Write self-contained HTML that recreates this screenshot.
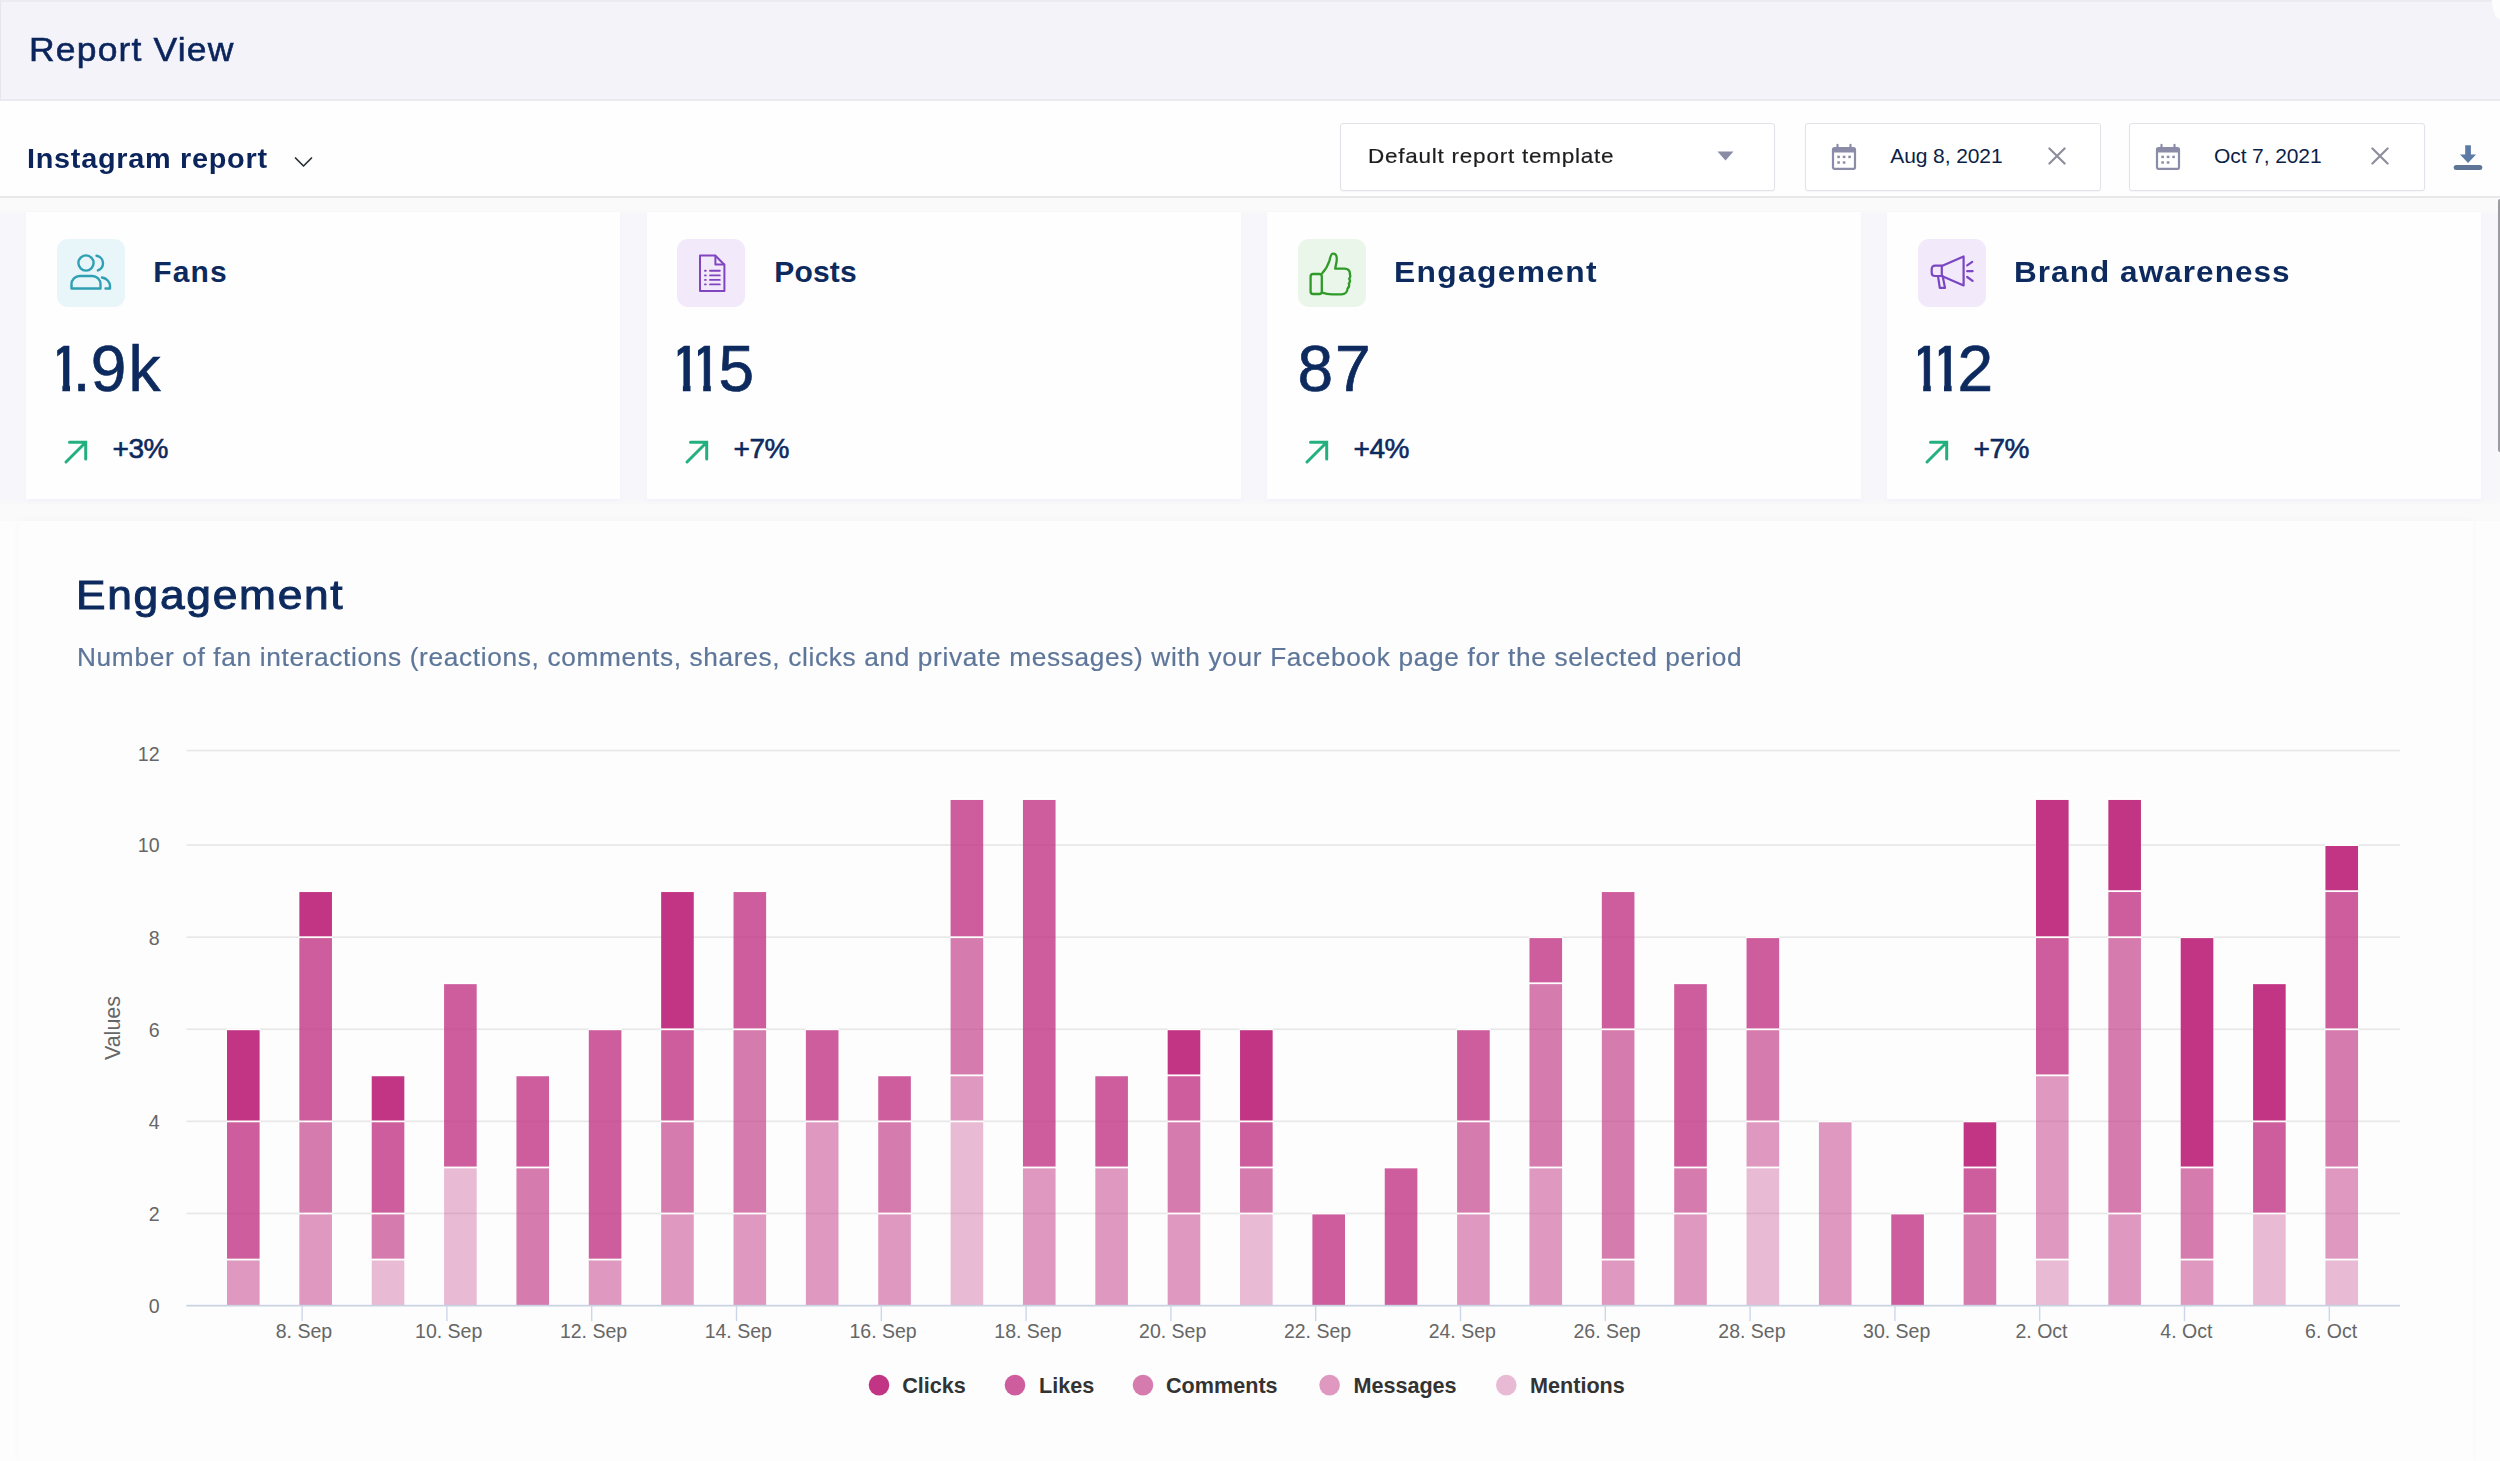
<!DOCTYPE html>
<html lang="en"><head><meta charset="utf-8"><title>Report View</title>
<style>
*{box-sizing:border-box}
html,body{margin:0;padding:0}
html{width:2500px;height:1461px;overflow:hidden}
body{width:2500px;height:1461px;overflow:hidden;background:#fdfdfd;font-family:"Liberation Sans",sans-serif;position:relative}
.t{position:absolute;white-space:nowrap}
.abs{position:absolute}
.hdr{position:absolute;left:0;top:0;width:2500px;height:100.5px;background:#f3f3f9;border-top:2px solid #ebebf0;border-left:1.5px solid #e6e6ee;border-bottom:2px solid #e9e9f0}
.bar{position:absolute;left:0;top:100.5px;width:2500px;height:97.3px;background:#fefefe;border-bottom:2px solid #e8e8ea}
.box{position:absolute;top:123px;height:67.5px;background:#fff;border:1.5px solid #e2e2e8;border-radius:3px;box-shadow:0 1px 2px rgba(0,0,0,.04)}
.strip{position:absolute;left:0;top:198px;width:2500px;height:323px;background:#fafafa}
.row{position:absolute;left:0;top:213px;width:2500px;height:289px;background:#f6f6fb;filter:blur(1.5px)}
.card{position:absolute;top:212px;width:594px;height:287px;background:#fefefe;box-shadow:0 2px 5px rgba(120,120,140,.035)}
.ib{position:absolute;left:31px;top:27px;width:68px;height:68px;border-radius:11px}
.panel{position:absolute;left:19px;top:521px;width:2454px;height:940px;background:#fdfdfd;box-shadow:0 0 7px 1px rgba(0,0,0,.022)}
.num span{display:inline-block;vertical-align:top}
.num .one{clip-path:polygon(10px 0,22.8px 0,22.8px 100%,15.200px 100%,15.200px 30px,10px 30px)}
.chart{position:absolute;left:0;top:0}
</style></head><body>
<div class="hdr"></div>
<div class="abs" style="left:2492px;top:0;width:8px;height:19px;background:#fdfdfd;border-bottom-left-radius:8px 19px"></div>
<div class="t" style="left:28.80px;top:33.04px;font-size:33.5px;line-height:33.5px;font-weight:normal;color:#0b255c;letter-spacing:1.1px;-webkit-text-stroke:0.55px #0b255c;transform:scaleX(1.06);transform-origin:0 50%;">Report View</div>
<div class="bar"></div>
<div class="t" style="left:27.20px;top:145.10px;font-size:28px;line-height:28px;font-weight:bold;color:#0b255c;letter-spacing:0.7px;transform:scaleX(1.03);transform-origin:0 50%;">Instagram report</div>
<svg class="abs" style="left:293px;top:155px" width="21" height="14" viewBox="0 0 21 14"><path d="M2.500 3l8 8 8-8" fill="none" stroke="#2b2f3a" stroke-width="1.700" stroke-linecap="round" stroke-linejoin="round"/></svg>
<div class="box" style="left:1340px;width:435px"></div>
<div class="t" style="left:1368.40px;top:145.02px;font-size:21px;line-height:21px;font-weight:normal;color:#1d1d1f;letter-spacing:0.72px;-webkit-text-stroke:0.2px #1d1d1f;transform:scaleX(1.07);transform-origin:0 50%;">Default report template</div>
<svg class="abs" style="left:1717px;top:151px" width="17" height="10" viewBox="0 0 17 10"><path d="M0.500 0.500h16l-8 9z" fill="#8a8ba5"/></svg>
<div class="box" style="left:1805px;width:296px"></div>
<div class="abs" style="left:1830.8px;top:143px"><svg width="26" height="28" viewBox="0 0 26 28"><g fill="none" stroke="#8b8ca8" stroke-width="2.200" stroke-linejoin="round" stroke-linecap="round">
<rect x="2" y="5.200" width="22" height="20.600" rx="1.500"/>
<path d="M6.500 1.800v4M19.500 1.800v4"/>
</g><rect x="2" y="5.200" width="22" height="4.300" fill="#8b8ca8"/>
<g fill="#8b8ca8"><rect x="6.300" y="12.700" width="2.600" height="2.400"/><rect x="11.800" y="12.700" width="2.600" height="2.400"/><rect x="17.300" y="12.700" width="2.600" height="2.400"/><rect x="6.300" y="18.300" width="2.600" height="2.400"/><rect x="11.800" y="18.300" width="2.600" height="2.400"/></g></svg></div>
<div class="t" style="left:1890.30px;top:144.72px;font-size:21px;line-height:21px;font-weight:normal;color:#0b1f47;letter-spacing:-0.1px;">Aug 8, 2021</div>
<div class="abs" style="left:2047.5px;top:146.600px"><svg width="18" height="18" viewBox="0 0 19 19"><path d="M1.500 1.500l16 16M17.500 1.500l-16 16" stroke="#8e8e9c" stroke-width="2.300" stroke-linecap="round"/></svg></div>
<div class="box" style="left:2128.5px;width:296px"></div>
<div class="abs" style="left:2154.6000000000004px;top:143px"><svg width="26" height="28" viewBox="0 0 26 28"><g fill="none" stroke="#8b8ca8" stroke-width="2.200" stroke-linejoin="round" stroke-linecap="round">
<rect x="2" y="5.200" width="22" height="20.600" rx="1.500"/>
<path d="M6.500 1.800v4M19.500 1.800v4"/>
</g><rect x="2" y="5.200" width="22" height="4.300" fill="#8b8ca8"/>
<g fill="#8b8ca8"><rect x="6.300" y="12.700" width="2.600" height="2.400"/><rect x="11.800" y="12.700" width="2.600" height="2.400"/><rect x="17.300" y="12.700" width="2.600" height="2.400"/><rect x="6.300" y="18.300" width="2.600" height="2.400"/><rect x="11.800" y="18.300" width="2.600" height="2.400"/></g></svg></div>
<div class="t" style="left:2214.00px;top:144.72px;font-size:21px;line-height:21px;font-weight:normal;color:#0b1f47;letter-spacing:-0.1px;">Oct 7, 2021</div>
<div class="abs" style="left:2371.3px;top:146.600px"><svg width="18" height="18" viewBox="0 0 19 19"><path d="M1.500 1.500l16 16M17.500 1.500l-16 16" stroke="#8e8e9c" stroke-width="2.300" stroke-linecap="round"/></svg></div>
<svg class="abs" style="left:2452px;top:143px" width="32" height="29" viewBox="0 0 32 29"><path d="M13.200 2.200h5.700v9.300h5.200l-8.050 8.400-8.050-8.400h5.200z" fill="#5b7ba6"/><rect x="1.700" y="21.900" width="28.600" height="5" rx="2.500" fill="#5f7598"/></svg>
<div class="strip"></div><div class="row"></div>
<div class="card" style="left:26px"><div class="ib" style="left:31px;background:#e8f6fa"><svg width="68" height="68" viewBox="0 0 68 68"><g fill="none" stroke="#2f9fb3" stroke-width="2.4" stroke-linecap="round" stroke-linejoin="round">
<circle cx="29" cy="24" r="7.6"/>
<path d="M14.5 49.5v-4.2c0-4.6 3.7-8.3 8.3-8.3h12.4c4.6 0 8.3 3.700 8.300 8.300v4.2z"/>
<path d="M39.500 16.800c3.700 0.600 6.500 3.700 6.500 7.500 0 3.300-2.100 6.100-5.100 7.100"/>
<path d="M45 38.500c4.600 0.700 8 4.300 8 8.600v2.400h-4.500"/>
</g></svg></div></div>
<div class="t" style="left:153.20px;top:256.91px;font-size:30px;line-height:30px;font-weight:bold;color:#0d2a5e;letter-spacing:1.2px;">Fans</div>
<div class="t num" style="left:47.2px;top:337.02px;height:64px;font-size:64px;line-height:64px;color:#0d2a5e;-webkit-text-stroke:0.7px #0d2a5e;"><span class="one">1</span><span style="margin-left:-9.94px">.</span><span style="margin-left:0.07px">9</span><span style="margin-left:2.21px">k</span></div>
<div class="abs" style="left:62.6px;top:437.500px"><svg width="28" height="28" viewBox="0 0 28 28"><path d="M3 24L22.500 4.500M6.500 4.300h16.200v16.700" fill="none" stroke="#23b07e" stroke-width="3" stroke-linecap="round" stroke-linejoin="miter"/></svg></div>
<div class="t" style="left:112.50px;top:435.30px;font-size:28px;line-height:28px;font-weight:normal;color:#0d2a5e;letter-spacing:-0.4px;-webkit-text-stroke:0.6px #0d2a5e;">+3%</div>
<div class="card" style="left:647px"><div class="ib" style="left:29.8px;background:#f2e9fb"><svg width="68" height="68" viewBox="0 0 68 68"><g fill="none" stroke="#8146bf" stroke-width="2" stroke-linejoin="round" stroke-linecap="round">
<path d="M23 16.500h15.200l9.200 9.200v26.300h-24.400z"/>
<path d="M38.400 16.800v8.800h8.800"/>
<path d="M33 31.800h9.800M33 36.400h9.800M33 40.900h9.800M33 45.400h9.800" stroke-width="1.900"/>
<path d="M28 31.800h.8M28 36.400h.8M28 40.900h.8M28 45.400h.8" stroke-width="1.900"/>
</g></svg></div></div>
<div class="t" style="left:774.20px;top:256.91px;font-size:30px;line-height:30px;font-weight:bold;color:#0d2a5e;letter-spacing:0.2px;">Posts</div>
<div class="t num" style="left:667.7px;top:337.02px;height:64px;font-size:64px;line-height:64px;color:#0d2a5e;-webkit-text-stroke:0.7px #0d2a5e;"><span class="one">1</span><span class="one" style="margin-left:-15.29px">1</span><span style="margin-left:-5.19px">5</span></div>
<div class="abs" style="left:683.6px;top:437.500px"><svg width="28" height="28" viewBox="0 0 28 28"><path d="M3 24L22.500 4.500M6.500 4.300h16.200v16.700" fill="none" stroke="#23b07e" stroke-width="3" stroke-linecap="round" stroke-linejoin="miter"/></svg></div>
<div class="t" style="left:733.50px;top:435.30px;font-size:28px;line-height:28px;font-weight:normal;color:#0d2a5e;letter-spacing:-0.4px;-webkit-text-stroke:0.6px #0d2a5e;">+7%</div>
<div class="card" style="left:1267px"><div class="ib" style="left:31.1px;background:#eaf6e9"><svg width="68" height="68" viewBox="0 0 68 68"><g fill="none" stroke="#2f9a28" stroke-width="2.300" stroke-linejoin="round" stroke-linecap="round">
<rect x="12.600" y="35" width="11.200" height="20" rx="2.600"/>
<path d="M24.200 34.200C27.500 30.600 30 26.600 31.500 21.500C32.300 18.500 32.800 14.700 35 14.700C37.300 14.700 38.800 16.800 38.800 20C38.800 23.500 37.600 26.500 37.200 29.600H46.500C50 29.600 52.300 32 51.800 35C52.500 36.500 52.300 38.500 51.200 39.800C52.200 41.300 52 43.300 50.800 44.600C51.500 46.300 51 48.200 49.600 49.300C49.600 52.800 47 55.300 43.500 55.300H34C30.500 55.300 27.500 54.800 24.200 53.600"/>
</g></svg></div></div>
<div class="t" style="left:1394.20px;top:256.91px;font-size:30px;line-height:30px;font-weight:bold;color:#0d2a5e;letter-spacing:1.23px;transform:scaleX(1.06);transform-origin:0 50%;">Engagement</div>
<div class="t num" style="left:1297.6px;top:337.02px;height:64px;font-size:64px;line-height:64px;color:#0d2a5e;-webkit-text-stroke:0.7px #0d2a5e;"><span>8</span><span style="margin-left:1.81px">7</span></div>
<div class="abs" style="left:1303.6px;top:437.500px"><svg width="28" height="28" viewBox="0 0 28 28"><path d="M3 24L22.500 4.500M6.500 4.300h16.200v16.700" fill="none" stroke="#23b07e" stroke-width="3" stroke-linecap="round" stroke-linejoin="miter"/></svg></div>
<div class="t" style="left:1353.50px;top:435.30px;font-size:28px;line-height:28px;font-weight:normal;color:#0d2a5e;letter-spacing:-0.4px;-webkit-text-stroke:0.6px #0d2a5e;">+4%</div>
<div class="card" style="left:1887px"><div class="ib" style="left:30.6px;background:#f2e9fb"><svg width="68" height="68" viewBox="0 0 68 68"><g fill="none" stroke="#7a46c2" stroke-width="2.200" stroke-linejoin="round" stroke-linecap="round">
<path d="M23.800 27l21.800-9.600v29l-21.800-9.400"/>
<path d="M23.800 26.600h-6.800c-1.900 0-3.300 1.400-3.300 3.300v3.800c0 1.900 1.400 3.300 3.300 3.300h6.800z"/>
<path d="M20 37.200l1.800 11.700h5.200l-2.300-11.700"/>
<path d="M49.200 26.300l5-3.400M49.200 32.200h5.400M49.200 38l5.400 3.900"/>
</g></svg></div></div>
<div class="t" style="left:2014.20px;top:256.91px;font-size:30px;line-height:30px;font-weight:bold;color:#0d2a5e;letter-spacing:1.0px;transform:scaleX(1.05);transform-origin:0 50%;">Brand awareness</div>
<div class="t num" style="left:1908px;top:337.02px;height:64px;font-size:64px;line-height:64px;color:#0d2a5e;-webkit-text-stroke:0.7px #0d2a5e;"><span class="one">1</span><span class="one" style="margin-left:-14.79px">1</span><span style="margin-left:-6.89px">2</span></div>
<div class="abs" style="left:1923.6px;top:437.500px"><svg width="28" height="28" viewBox="0 0 28 28"><path d="M3 24L22.500 4.500M6.500 4.300h16.200v16.700" fill="none" stroke="#23b07e" stroke-width="3" stroke-linecap="round" stroke-linejoin="miter"/></svg></div>
<div class="t" style="left:1973.50px;top:435.30px;font-size:28px;line-height:28px;font-weight:normal;color:#0d2a5e;letter-spacing:-0.4px;-webkit-text-stroke:0.6px #0d2a5e;">+7%</div>
<div class="panel"></div>
<div class="t" style="left:76.00px;top:575.29px;font-size:41px;line-height:41px;font-weight:normal;color:#0d2a5e;letter-spacing:1.6px;-webkit-text-stroke:1.0px #0d2a5e;transform:scaleX(1.08);transform-origin:0 50%;">Engagement</div>
<div class="t" style="left:76.80px;top:645.04px;font-size:25px;line-height:25px;font-weight:normal;color:#5d7699;letter-spacing:0.62px;-webkit-text-stroke:0.2px #5d7699;transform:scaleX(1.05);transform-origin:0 50%;">Number of fan interactions (reactions, comments, shares, clicks and private messages) with your Facebook page for the selected period</div>
<svg class="chart" width="2500" height="1461" viewBox="0 0 2500 1461" font-family="Liberation Sans, sans-serif">
<text x="159.6" y="1312.90" font-size="19.6" fill="#666" text-anchor="end">0</text>
<rect x="186.4" y="1212.60" width="2213.6" height="1.7" fill="#e8e8e8"/>
<text x="159.6" y="1220.80" font-size="19.6" fill="#666" text-anchor="end">2</text>
<rect x="186.4" y="1120.50" width="2213.6" height="1.7" fill="#e8e8e8"/>
<text x="159.6" y="1128.70" font-size="19.6" fill="#666" text-anchor="end">4</text>
<rect x="186.4" y="1028.40" width="2213.6" height="1.7" fill="#e8e8e8"/>
<text x="159.6" y="1036.60" font-size="19.6" fill="#666" text-anchor="end">6</text>
<rect x="186.4" y="936.30" width="2213.6" height="1.7" fill="#e8e8e8"/>
<text x="159.6" y="944.50" font-size="19.6" fill="#666" text-anchor="end">8</text>
<rect x="186.4" y="844.20" width="2213.6" height="1.7" fill="#e8e8e8"/>
<text x="159.6" y="852.40" font-size="19.6" fill="#666" text-anchor="end">10</text>
<rect x="186.4" y="749.70" width="2213.6" height="1.7" fill="#e8e8e8"/>
<text x="159.6" y="760.70" font-size="19.6" fill="#666" text-anchor="end">12</text>
<rect x="227.00" y="1259.55" width="32.6" height="46.05" fill="rgb(193,53,132)" fill-opacity="0.5"/>
<rect x="227.00" y="1121.40" width="32.6" height="138.15" fill="rgb(193,53,132)" fill-opacity="0.8"/>
<rect x="227.00" y="1029.30" width="32.6" height="92.10" fill="rgb(193,53,132)" fill-opacity="1.0"/>
<rect x="226.50" y="1258.65" width="33.6" height="1.8" fill="#fff"/>
<rect x="226.50" y="1120.50" width="33.6" height="1.8" fill="#fff"/>
<rect x="226.50" y="1028.40" width="33.6" height="1.8" fill="#fff"/>
<rect x="299.36" y="1213.50" width="32.6" height="92.10" fill="rgb(193,53,132)" fill-opacity="0.5"/>
<rect x="299.36" y="1121.40" width="32.6" height="92.10" fill="rgb(193,53,132)" fill-opacity="0.65"/>
<rect x="299.36" y="937.20" width="32.6" height="184.20" fill="rgb(193,53,132)" fill-opacity="0.8"/>
<rect x="299.36" y="891.15" width="32.6" height="46.05" fill="rgb(193,53,132)" fill-opacity="1.0"/>
<rect x="298.86" y="1212.60" width="33.6" height="1.8" fill="#fff"/>
<rect x="298.86" y="1120.50" width="33.6" height="1.8" fill="#fff"/>
<rect x="298.86" y="936.30" width="33.6" height="1.8" fill="#fff"/>
<rect x="298.86" y="890.25" width="33.6" height="1.8" fill="#fff"/>
<rect x="371.72" y="1259.55" width="32.6" height="46.05" fill="rgb(193,53,132)" fill-opacity="0.33"/>
<rect x="371.72" y="1213.50" width="32.6" height="46.05" fill="rgb(193,53,132)" fill-opacity="0.65"/>
<rect x="371.72" y="1121.40" width="32.6" height="92.10" fill="rgb(193,53,132)" fill-opacity="0.8"/>
<rect x="371.72" y="1075.35" width="32.6" height="46.05" fill="rgb(193,53,132)" fill-opacity="1.0"/>
<rect x="371.22" y="1258.65" width="33.6" height="1.8" fill="#fff"/>
<rect x="371.22" y="1212.60" width="33.6" height="1.8" fill="#fff"/>
<rect x="371.22" y="1120.50" width="33.6" height="1.8" fill="#fff"/>
<rect x="371.22" y="1074.45" width="33.6" height="1.8" fill="#fff"/>
<rect x="444.08" y="1167.45" width="32.6" height="138.15" fill="rgb(193,53,132)" fill-opacity="0.33"/>
<rect x="444.08" y="983.25" width="32.6" height="184.20" fill="rgb(193,53,132)" fill-opacity="0.8"/>
<rect x="443.58" y="1166.55" width="33.6" height="1.8" fill="#fff"/>
<rect x="443.58" y="982.35" width="33.6" height="1.8" fill="#fff"/>
<rect x="516.44" y="1167.45" width="32.6" height="138.15" fill="rgb(193,53,132)" fill-opacity="0.65"/>
<rect x="516.44" y="1075.35" width="32.6" height="92.10" fill="rgb(193,53,132)" fill-opacity="0.8"/>
<rect x="515.94" y="1166.55" width="33.6" height="1.8" fill="#fff"/>
<rect x="515.94" y="1074.45" width="33.6" height="1.8" fill="#fff"/>
<rect x="588.80" y="1259.55" width="32.6" height="46.05" fill="rgb(193,53,132)" fill-opacity="0.5"/>
<rect x="588.80" y="1029.30" width="32.6" height="230.25" fill="rgb(193,53,132)" fill-opacity="0.8"/>
<rect x="588.30" y="1258.65" width="33.6" height="1.8" fill="#fff"/>
<rect x="588.30" y="1028.40" width="33.6" height="1.8" fill="#fff"/>
<rect x="661.16" y="1213.50" width="32.6" height="92.10" fill="rgb(193,53,132)" fill-opacity="0.5"/>
<rect x="661.16" y="1121.40" width="32.6" height="92.10" fill="rgb(193,53,132)" fill-opacity="0.65"/>
<rect x="661.16" y="1029.30" width="32.6" height="92.10" fill="rgb(193,53,132)" fill-opacity="0.8"/>
<rect x="661.16" y="891.15" width="32.6" height="138.15" fill="rgb(193,53,132)" fill-opacity="1.0"/>
<rect x="660.66" y="1212.60" width="33.6" height="1.8" fill="#fff"/>
<rect x="660.66" y="1120.50" width="33.6" height="1.8" fill="#fff"/>
<rect x="660.66" y="1028.40" width="33.6" height="1.8" fill="#fff"/>
<rect x="660.66" y="890.25" width="33.6" height="1.8" fill="#fff"/>
<rect x="733.52" y="1213.50" width="32.6" height="92.10" fill="rgb(193,53,132)" fill-opacity="0.5"/>
<rect x="733.52" y="1029.30" width="32.6" height="184.20" fill="rgb(193,53,132)" fill-opacity="0.65"/>
<rect x="733.52" y="891.15" width="32.6" height="138.15" fill="rgb(193,53,132)" fill-opacity="0.8"/>
<rect x="733.02" y="1212.60" width="33.6" height="1.8" fill="#fff"/>
<rect x="733.02" y="1028.40" width="33.6" height="1.8" fill="#fff"/>
<rect x="733.02" y="890.25" width="33.6" height="1.8" fill="#fff"/>
<rect x="805.88" y="1121.40" width="32.6" height="184.20" fill="rgb(193,53,132)" fill-opacity="0.5"/>
<rect x="805.88" y="1029.30" width="32.6" height="92.10" fill="rgb(193,53,132)" fill-opacity="0.8"/>
<rect x="805.38" y="1120.50" width="33.6" height="1.8" fill="#fff"/>
<rect x="805.38" y="1028.40" width="33.6" height="1.8" fill="#fff"/>
<rect x="878.24" y="1213.50" width="32.6" height="92.10" fill="rgb(193,53,132)" fill-opacity="0.5"/>
<rect x="878.24" y="1121.40" width="32.6" height="92.10" fill="rgb(193,53,132)" fill-opacity="0.65"/>
<rect x="878.24" y="1075.35" width="32.6" height="46.05" fill="rgb(193,53,132)" fill-opacity="0.8"/>
<rect x="877.74" y="1212.60" width="33.6" height="1.8" fill="#fff"/>
<rect x="877.74" y="1120.50" width="33.6" height="1.8" fill="#fff"/>
<rect x="877.74" y="1074.45" width="33.6" height="1.8" fill="#fff"/>
<rect x="950.60" y="1121.40" width="32.6" height="184.20" fill="rgb(193,53,132)" fill-opacity="0.33"/>
<rect x="950.60" y="1075.35" width="32.6" height="46.05" fill="rgb(193,53,132)" fill-opacity="0.5"/>
<rect x="950.60" y="937.20" width="32.6" height="138.15" fill="rgb(193,53,132)" fill-opacity="0.65"/>
<rect x="950.60" y="799.05" width="32.6" height="138.15" fill="rgb(193,53,132)" fill-opacity="0.8"/>
<rect x="950.10" y="1120.50" width="33.6" height="1.8" fill="#fff"/>
<rect x="950.10" y="1074.45" width="33.6" height="1.8" fill="#fff"/>
<rect x="950.10" y="936.30" width="33.6" height="1.8" fill="#fff"/>
<rect x="950.10" y="798.15" width="33.6" height="1.8" fill="#fff"/>
<rect x="1022.96" y="1167.45" width="32.6" height="138.15" fill="rgb(193,53,132)" fill-opacity="0.5"/>
<rect x="1022.96" y="799.05" width="32.6" height="368.40" fill="rgb(193,53,132)" fill-opacity="0.8"/>
<rect x="1022.46" y="1166.55" width="33.6" height="1.8" fill="#fff"/>
<rect x="1022.46" y="798.15" width="33.6" height="1.8" fill="#fff"/>
<rect x="1095.32" y="1167.45" width="32.6" height="138.15" fill="rgb(193,53,132)" fill-opacity="0.5"/>
<rect x="1095.32" y="1075.35" width="32.6" height="92.10" fill="rgb(193,53,132)" fill-opacity="0.8"/>
<rect x="1094.82" y="1166.55" width="33.6" height="1.8" fill="#fff"/>
<rect x="1094.82" y="1074.45" width="33.6" height="1.8" fill="#fff"/>
<rect x="1167.68" y="1213.50" width="32.6" height="92.10" fill="rgb(193,53,132)" fill-opacity="0.5"/>
<rect x="1167.68" y="1121.40" width="32.6" height="92.10" fill="rgb(193,53,132)" fill-opacity="0.65"/>
<rect x="1167.68" y="1075.35" width="32.6" height="46.05" fill="rgb(193,53,132)" fill-opacity="0.8"/>
<rect x="1167.68" y="1029.30" width="32.6" height="46.05" fill="rgb(193,53,132)" fill-opacity="1.0"/>
<rect x="1167.18" y="1212.60" width="33.6" height="1.8" fill="#fff"/>
<rect x="1167.18" y="1120.50" width="33.6" height="1.8" fill="#fff"/>
<rect x="1167.18" y="1074.45" width="33.6" height="1.8" fill="#fff"/>
<rect x="1167.18" y="1028.40" width="33.6" height="1.8" fill="#fff"/>
<rect x="1240.04" y="1213.50" width="32.6" height="92.10" fill="rgb(193,53,132)" fill-opacity="0.33"/>
<rect x="1240.04" y="1167.45" width="32.6" height="46.05" fill="rgb(193,53,132)" fill-opacity="0.65"/>
<rect x="1240.04" y="1121.40" width="32.6" height="46.05" fill="rgb(193,53,132)" fill-opacity="0.8"/>
<rect x="1240.04" y="1029.30" width="32.6" height="92.10" fill="rgb(193,53,132)" fill-opacity="1.0"/>
<rect x="1239.54" y="1212.60" width="33.6" height="1.8" fill="#fff"/>
<rect x="1239.54" y="1166.55" width="33.6" height="1.8" fill="#fff"/>
<rect x="1239.54" y="1120.50" width="33.6" height="1.8" fill="#fff"/>
<rect x="1239.54" y="1028.40" width="33.6" height="1.8" fill="#fff"/>
<rect x="1312.40" y="1213.50" width="32.6" height="92.10" fill="rgb(193,53,132)" fill-opacity="0.8"/>
<rect x="1311.90" y="1212.60" width="33.6" height="1.8" fill="#fff"/>
<rect x="1384.76" y="1167.45" width="32.6" height="138.15" fill="rgb(193,53,132)" fill-opacity="0.8"/>
<rect x="1384.26" y="1166.55" width="33.6" height="1.8" fill="#fff"/>
<rect x="1457.12" y="1213.50" width="32.6" height="92.10" fill="rgb(193,53,132)" fill-opacity="0.5"/>
<rect x="1457.12" y="1121.40" width="32.6" height="92.10" fill="rgb(193,53,132)" fill-opacity="0.65"/>
<rect x="1457.12" y="1029.30" width="32.6" height="92.10" fill="rgb(193,53,132)" fill-opacity="0.8"/>
<rect x="1456.62" y="1212.60" width="33.6" height="1.8" fill="#fff"/>
<rect x="1456.62" y="1120.50" width="33.6" height="1.8" fill="#fff"/>
<rect x="1456.62" y="1028.40" width="33.6" height="1.8" fill="#fff"/>
<rect x="1529.48" y="1167.45" width="32.6" height="138.15" fill="rgb(193,53,132)" fill-opacity="0.5"/>
<rect x="1529.48" y="983.25" width="32.6" height="184.20" fill="rgb(193,53,132)" fill-opacity="0.65"/>
<rect x="1529.48" y="937.20" width="32.6" height="46.05" fill="rgb(193,53,132)" fill-opacity="0.8"/>
<rect x="1528.98" y="1166.55" width="33.6" height="1.8" fill="#fff"/>
<rect x="1528.98" y="982.35" width="33.6" height="1.8" fill="#fff"/>
<rect x="1528.98" y="936.30" width="33.6" height="1.8" fill="#fff"/>
<rect x="1601.84" y="1259.55" width="32.6" height="46.05" fill="rgb(193,53,132)" fill-opacity="0.5"/>
<rect x="1601.84" y="1029.30" width="32.6" height="230.25" fill="rgb(193,53,132)" fill-opacity="0.65"/>
<rect x="1601.84" y="891.15" width="32.6" height="138.15" fill="rgb(193,53,132)" fill-opacity="0.8"/>
<rect x="1601.34" y="1258.65" width="33.6" height="1.8" fill="#fff"/>
<rect x="1601.34" y="1028.40" width="33.6" height="1.8" fill="#fff"/>
<rect x="1601.34" y="890.25" width="33.6" height="1.8" fill="#fff"/>
<rect x="1674.20" y="1213.50" width="32.6" height="92.10" fill="rgb(193,53,132)" fill-opacity="0.5"/>
<rect x="1674.20" y="1167.45" width="32.6" height="46.05" fill="rgb(193,53,132)" fill-opacity="0.65"/>
<rect x="1674.20" y="983.25" width="32.6" height="184.20" fill="rgb(193,53,132)" fill-opacity="0.8"/>
<rect x="1673.70" y="1212.60" width="33.6" height="1.8" fill="#fff"/>
<rect x="1673.70" y="1166.55" width="33.6" height="1.8" fill="#fff"/>
<rect x="1673.70" y="982.35" width="33.6" height="1.8" fill="#fff"/>
<rect x="1746.56" y="1167.45" width="32.6" height="138.15" fill="rgb(193,53,132)" fill-opacity="0.33"/>
<rect x="1746.56" y="1121.40" width="32.6" height="46.05" fill="rgb(193,53,132)" fill-opacity="0.5"/>
<rect x="1746.56" y="1029.30" width="32.6" height="92.10" fill="rgb(193,53,132)" fill-opacity="0.65"/>
<rect x="1746.56" y="937.20" width="32.6" height="92.10" fill="rgb(193,53,132)" fill-opacity="0.8"/>
<rect x="1746.06" y="1166.55" width="33.6" height="1.8" fill="#fff"/>
<rect x="1746.06" y="1120.50" width="33.6" height="1.8" fill="#fff"/>
<rect x="1746.06" y="1028.40" width="33.6" height="1.8" fill="#fff"/>
<rect x="1746.06" y="936.30" width="33.6" height="1.8" fill="#fff"/>
<rect x="1818.92" y="1121.40" width="32.6" height="184.20" fill="rgb(193,53,132)" fill-opacity="0.5"/>
<rect x="1818.42" y="1120.50" width="33.6" height="1.8" fill="#fff"/>
<rect x="1891.28" y="1213.50" width="32.6" height="92.10" fill="rgb(193,53,132)" fill-opacity="0.8"/>
<rect x="1890.78" y="1212.60" width="33.6" height="1.8" fill="#fff"/>
<rect x="1963.64" y="1213.50" width="32.6" height="92.10" fill="rgb(193,53,132)" fill-opacity="0.65"/>
<rect x="1963.64" y="1167.45" width="32.6" height="46.05" fill="rgb(193,53,132)" fill-opacity="0.8"/>
<rect x="1963.64" y="1121.40" width="32.6" height="46.05" fill="rgb(193,53,132)" fill-opacity="1.0"/>
<rect x="1963.14" y="1212.60" width="33.6" height="1.8" fill="#fff"/>
<rect x="1963.14" y="1166.55" width="33.6" height="1.8" fill="#fff"/>
<rect x="1963.14" y="1120.50" width="33.6" height="1.8" fill="#fff"/>
<rect x="2036.00" y="1259.55" width="32.6" height="46.05" fill="rgb(193,53,132)" fill-opacity="0.33"/>
<rect x="2036.00" y="1075.35" width="32.6" height="184.20" fill="rgb(193,53,132)" fill-opacity="0.5"/>
<rect x="2036.00" y="937.20" width="32.6" height="138.15" fill="rgb(193,53,132)" fill-opacity="0.8"/>
<rect x="2036.00" y="799.05" width="32.6" height="138.15" fill="rgb(193,53,132)" fill-opacity="1.0"/>
<rect x="2035.50" y="1258.65" width="33.6" height="1.8" fill="#fff"/>
<rect x="2035.50" y="1074.45" width="33.6" height="1.8" fill="#fff"/>
<rect x="2035.50" y="936.30" width="33.6" height="1.8" fill="#fff"/>
<rect x="2035.50" y="798.15" width="33.6" height="1.8" fill="#fff"/>
<rect x="2108.36" y="1213.50" width="32.6" height="92.10" fill="rgb(193,53,132)" fill-opacity="0.5"/>
<rect x="2108.36" y="937.20" width="32.6" height="276.30" fill="rgb(193,53,132)" fill-opacity="0.65"/>
<rect x="2108.36" y="891.15" width="32.6" height="46.05" fill="rgb(193,53,132)" fill-opacity="0.8"/>
<rect x="2108.36" y="799.05" width="32.6" height="92.10" fill="rgb(193,53,132)" fill-opacity="1.0"/>
<rect x="2107.86" y="1212.60" width="33.6" height="1.8" fill="#fff"/>
<rect x="2107.86" y="936.30" width="33.6" height="1.8" fill="#fff"/>
<rect x="2107.86" y="890.25" width="33.6" height="1.8" fill="#fff"/>
<rect x="2107.86" y="798.15" width="33.6" height="1.8" fill="#fff"/>
<rect x="2180.72" y="1259.55" width="32.6" height="46.05" fill="rgb(193,53,132)" fill-opacity="0.5"/>
<rect x="2180.72" y="1167.45" width="32.6" height="92.10" fill="rgb(193,53,132)" fill-opacity="0.65"/>
<rect x="2180.72" y="937.20" width="32.6" height="230.25" fill="rgb(193,53,132)" fill-opacity="1.0"/>
<rect x="2180.22" y="1258.65" width="33.6" height="1.8" fill="#fff"/>
<rect x="2180.22" y="1166.55" width="33.6" height="1.8" fill="#fff"/>
<rect x="2180.22" y="936.30" width="33.6" height="1.8" fill="#fff"/>
<rect x="2253.08" y="1213.50" width="32.6" height="92.10" fill="rgb(193,53,132)" fill-opacity="0.33"/>
<rect x="2253.08" y="1121.40" width="32.6" height="92.10" fill="rgb(193,53,132)" fill-opacity="0.8"/>
<rect x="2253.08" y="983.25" width="32.6" height="138.15" fill="rgb(193,53,132)" fill-opacity="1.0"/>
<rect x="2252.58" y="1212.60" width="33.6" height="1.8" fill="#fff"/>
<rect x="2252.58" y="1120.50" width="33.6" height="1.8" fill="#fff"/>
<rect x="2252.58" y="982.35" width="33.6" height="1.8" fill="#fff"/>
<rect x="2325.44" y="1259.55" width="32.6" height="46.05" fill="rgb(193,53,132)" fill-opacity="0.33"/>
<rect x="2325.44" y="1167.45" width="32.6" height="92.10" fill="rgb(193,53,132)" fill-opacity="0.5"/>
<rect x="2325.44" y="1029.30" width="32.6" height="138.15" fill="rgb(193,53,132)" fill-opacity="0.65"/>
<rect x="2325.44" y="891.15" width="32.6" height="138.15" fill="rgb(193,53,132)" fill-opacity="0.8"/>
<rect x="2325.44" y="845.10" width="32.6" height="46.05" fill="rgb(193,53,132)" fill-opacity="1.0"/>
<rect x="2324.94" y="1258.65" width="33.6" height="1.8" fill="#fff"/>
<rect x="2324.94" y="1166.55" width="33.6" height="1.8" fill="#fff"/>
<rect x="2324.94" y="1028.40" width="33.6" height="1.8" fill="#fff"/>
<rect x="2324.94" y="890.25" width="33.6" height="1.8" fill="#fff"/>
<rect x="2324.94" y="844.20" width="33.6" height="1.8" fill="#fff"/>
<rect x="186.4" y="1304.80" width="2213.6" height="1.7" fill="#c9d2e2"/>
<rect x="301.40" y="1305.60" width="1.4" height="15.5" fill="#ccd6eb"/>
<text x="303.90" y="1338" font-size="19.5" fill="#666" text-anchor="middle">8. Sep</text>
<rect x="446.20" y="1305.60" width="1.4" height="15.5" fill="#ccd6eb"/>
<text x="448.70" y="1338" font-size="19.5" fill="#666" text-anchor="middle">10. Sep</text>
<rect x="591.00" y="1305.60" width="1.4" height="15.5" fill="#ccd6eb"/>
<text x="593.50" y="1338" font-size="19.5" fill="#666" text-anchor="middle">12. Sep</text>
<rect x="735.80" y="1305.60" width="1.4" height="15.5" fill="#ccd6eb"/>
<text x="738.30" y="1338" font-size="19.5" fill="#666" text-anchor="middle">14. Sep</text>
<rect x="880.60" y="1305.60" width="1.4" height="15.5" fill="#ccd6eb"/>
<text x="883.10" y="1338" font-size="19.5" fill="#666" text-anchor="middle">16. Sep</text>
<rect x="1025.40" y="1305.60" width="1.4" height="15.5" fill="#ccd6eb"/>
<text x="1027.90" y="1338" font-size="19.5" fill="#666" text-anchor="middle">18. Sep</text>
<rect x="1170.20" y="1305.60" width="1.4" height="15.5" fill="#ccd6eb"/>
<text x="1172.70" y="1338" font-size="19.5" fill="#666" text-anchor="middle">20. Sep</text>
<rect x="1315.00" y="1305.60" width="1.4" height="15.5" fill="#ccd6eb"/>
<text x="1317.50" y="1338" font-size="19.5" fill="#666" text-anchor="middle">22. Sep</text>
<rect x="1459.80" y="1305.60" width="1.4" height="15.5" fill="#ccd6eb"/>
<text x="1462.30" y="1338" font-size="19.5" fill="#666" text-anchor="middle">24. Sep</text>
<rect x="1604.60" y="1305.60" width="1.4" height="15.5" fill="#ccd6eb"/>
<text x="1607.10" y="1338" font-size="19.5" fill="#666" text-anchor="middle">26. Sep</text>
<rect x="1749.40" y="1305.60" width="1.4" height="15.5" fill="#ccd6eb"/>
<text x="1751.90" y="1338" font-size="19.5" fill="#666" text-anchor="middle">28. Sep</text>
<rect x="1894.20" y="1305.60" width="1.4" height="15.5" fill="#ccd6eb"/>
<text x="1896.70" y="1338" font-size="19.5" fill="#666" text-anchor="middle">30. Sep</text>
<rect x="2039.00" y="1305.60" width="1.4" height="15.5" fill="#ccd6eb"/>
<text x="2041.50" y="1338" font-size="19.5" fill="#666" text-anchor="middle">2. Oct</text>
<rect x="2183.80" y="1305.60" width="1.4" height="15.5" fill="#ccd6eb"/>
<text x="2186.30" y="1338" font-size="19.5" fill="#666" text-anchor="middle">4. Oct</text>
<rect x="2328.60" y="1305.60" width="1.4" height="15.5" fill="#ccd6eb"/>
<text x="2331.10" y="1338" font-size="19.5" fill="#666" text-anchor="middle">6. Oct</text>
<text transform="translate(119.5,1028) rotate(-90)" font-size="21.5" fill="#666" text-anchor="middle">Values</text>
<circle cx="879" cy="1385.1" r="10.3" fill="rgb(193,53,132)" fill-opacity="1.0"/>
<text x="902.2" y="1393.3" font-size="21.6" font-weight="bold" fill="#333">Clicks</text>
<circle cx="1015" cy="1385.1" r="10.3" fill="rgb(193,53,132)" fill-opacity="0.8"/>
<text x="1039" y="1393.3" font-size="21.6" font-weight="bold" fill="#333">Likes</text>
<circle cx="1143" cy="1385.1" r="10.3" fill="rgb(193,53,132)" fill-opacity="0.65"/>
<text x="1166" y="1393.3" font-size="21.6" font-weight="bold" fill="#333">Comments</text>
<circle cx="1329.6" cy="1385.1" r="10.3" fill="rgb(193,53,132)" fill-opacity="0.5"/>
<text x="1353.4" y="1393.3" font-size="21.6" font-weight="bold" fill="#333">Messages</text>
<circle cx="1506.3" cy="1385.1" r="10.3" fill="rgb(193,53,132)" fill-opacity="0.33"/>
<text x="1530" y="1393.3" font-size="21.6" font-weight="bold" fill="#333">Mentions</text>
</svg>
<div class="abs" style="left:2497.500px;top:199px;width:2.500px;height:253px;background:#9b9ba1;border-radius:2px 0 0 2px"></div>
</body></html>
